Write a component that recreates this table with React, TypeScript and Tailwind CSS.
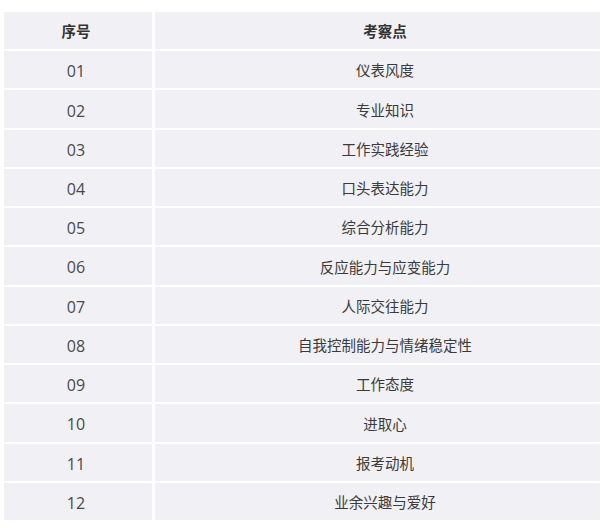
import React from "react";

const rows: [string, string][] = [
  ["01", "仪表风度"],
  ["02", "专业知识"],
  ["03", "工作实践经验"],
  ["04", "口头表达能力"],
  ["05", "综合分析能力"],
  ["06", "反应能力与应变能力"],
  ["07", "人际交往能力"],
  ["08", "自我控制能力与情绪稳定性"],
  ["09", "工作态度"],
  ["10", "进取心"],
  ["11", "报考动机"],
  ["12", "业余兴趣与爱好"],
];

export default function App() {
  return (
    <div
      className="w-[603px] h-[528px] bg-white pt-[12px] pl-[4px] pr-[3px] text-[#3a3a3a]"
      style={{ fontFamily: '"Open Sans", "Noto Sans CJK SC", sans-serif' }}
    >
      <div className="grid grid-cols-[148px_1fr] grid-rows-[repeat(13,1fr)] gap-x-[3px] gap-y-[2px] h-[508px] text-[14.5px]">
        <div className="bg-[#f1f0f5] flex items-center justify-center pr-[4px] pt-[3px] font-bold text-[#333]">序号</div>
        <div className="bg-[#f1f0f5] flex items-center justify-center pl-[15px] pt-[3px] font-bold text-[#333]">考察点</div>
        {rows.map(([n, t]) => (
          <React.Fragment key={n}>
            <div className="bg-[#f1f0f5] flex items-center justify-center pr-[4px] pt-[3px] text-[16px] text-[#4a4a4a]">{n}</div>
            <div className="bg-[#f1f0f5] flex items-center justify-center pl-[15px] pt-[3px]">{t}</div>
          </React.Fragment>
        ))}
      </div>
    </div>
  );
}
